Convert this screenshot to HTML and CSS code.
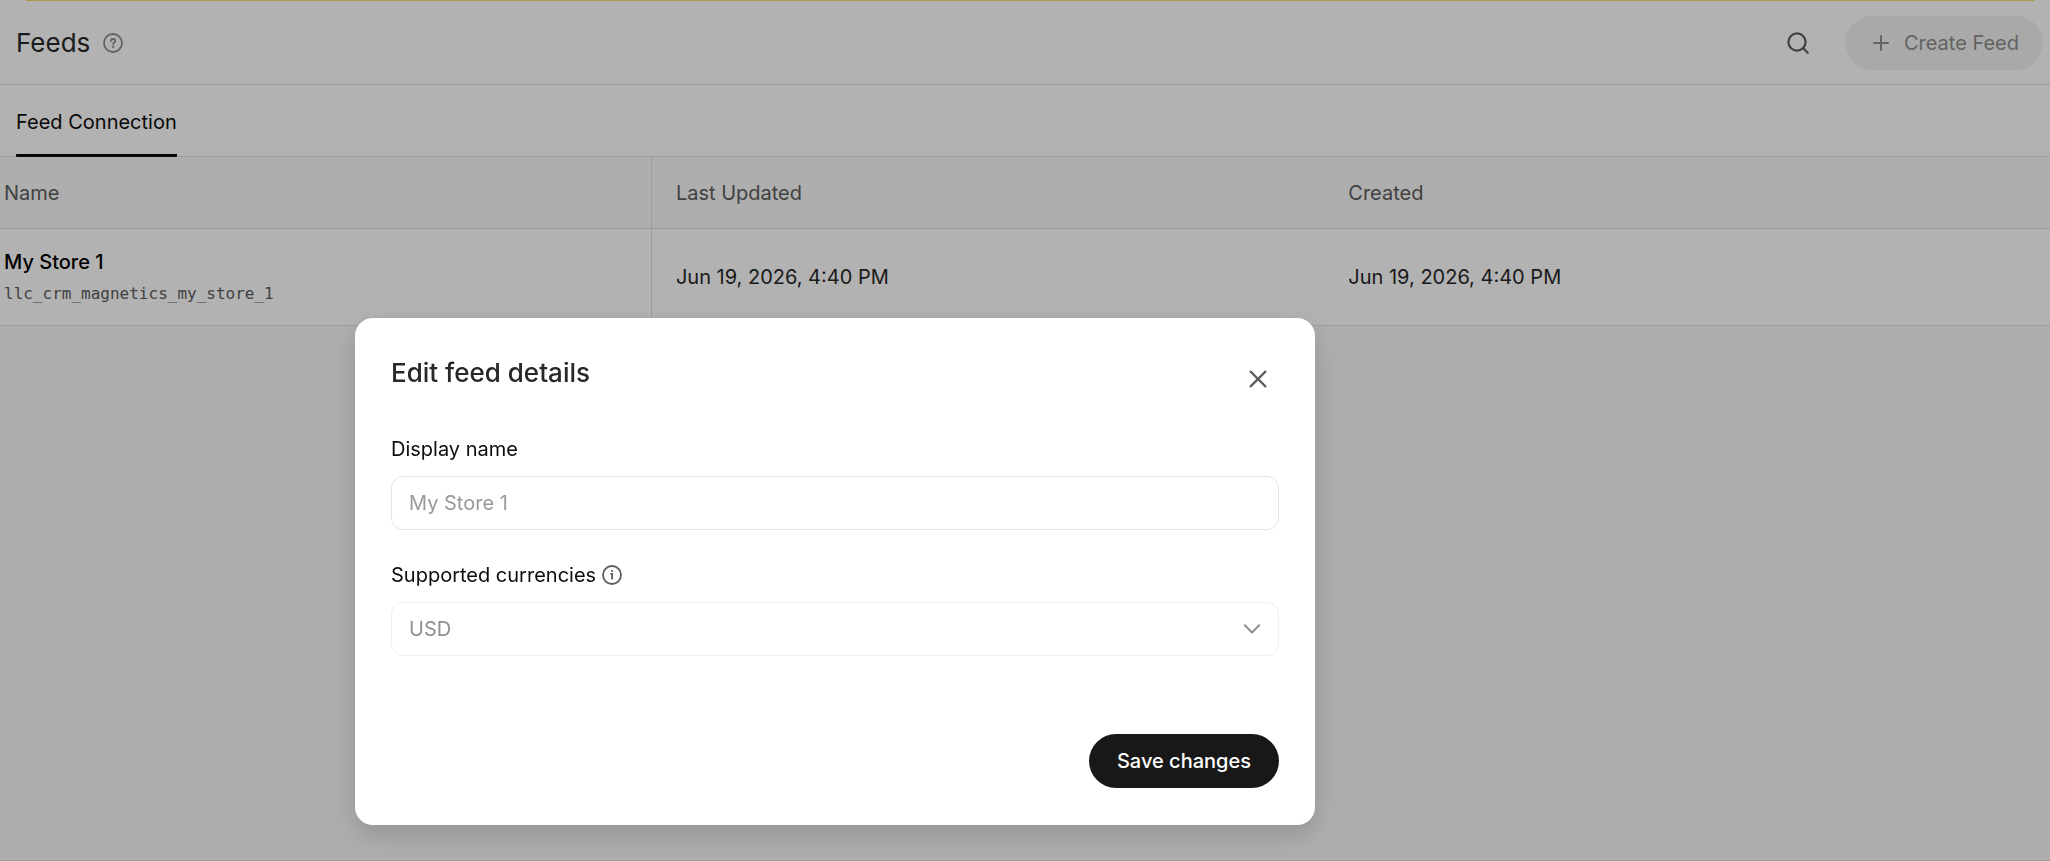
FILE: index.html
```
<!DOCTYPE html>
<html lang="en">
<head>
    <meta charset="UTF-8">
    <meta name="viewport" content="width=device-width, initial-scale=1.0">
    <title>Feeds</title>
    <link rel="stylesheet" href="styles.css">
</head>
<body>
    <div class="page">
        <div class="notice"></div>
        <header class="page-header">
            <div class="page-title">
                <h1>Feeds</h1>
                <svg class="help-icon" width="20" height="20" viewBox="0 0 20 20" fill="none" stroke="currentColor" stroke-width="1.8" stroke-linecap="round">
                    <circle cx="10" cy="10" r="9"/>
                    <path d="M7.9 8.1c0-1.3.9-2.1 2.1-2.1s2.2.8 2.2 2c0 1.5-2 1.6-2 3.1"/>
                    <circle cx="10.2" cy="13.7" r=".4"/>
                </svg>
            </div>
            <div class="page-actions">
                <button class="icon-btn" type="button" aria-label="Search">
                    <svg width="24" height="24" viewBox="0 0 24 24" fill="none" stroke="currentColor" stroke-width="2.2" stroke-linecap="round">
                        <circle cx="11" cy="11" r="8.6"/>
                        <path d="M17.3 17.3l4.4 4.4"/>
                    </svg>
                </button>
                <button class="create-btn" type="button" disabled>
                    <svg width="16" height="16" viewBox="0 0 16 16" fill="none" stroke="currentColor" stroke-width="2" stroke-linecap="round">
                        <path d="M8 1v14M1 8h14"/>
                    </svg>
                    Create Feed
                </button>
            </div>
        </header>

        <nav class="tabs">
            <a class="tab active" href="#">Feed Connection</a>
        </nav>

        <table class="feed-table">
            <thead>
                <tr>
                    <th class="col-name">Name</th>
                    <th class="col-updated">Last Updated</th>
                    <th>Created</th>
                </tr>
            </thead>
            <tbody>
                <tr>
                    <td class="col-name">
                        <div class="feed-name">My Store 1</div>
                        <div class="feed-id">llc_crm_magnetics_my_store_1</div>
                    </td>
                    <td>Jun 19, 2026, 4:40 PM</td>
                    <td>Jun 19, 2026, 4:40 PM</td>
                </tr>
            </tbody>
        </table>
    </div>

    <div class="overlay">
        <div class="modal" role="dialog" aria-labelledby="modalTitle">
            <div class="modal-header">
                <h2 id="modalTitle">Edit feed details</h2>
                <button class="close-btn" type="button" aria-label="Close">
                    <svg width="18" height="18" viewBox="0 0 18 18" fill="none" stroke="currentColor" stroke-width="2.2" stroke-linecap="round">
                        <path d="M1.6 1.6l14.8 14.8M16.4 1.6L1.6 16.4"/>
                    </svg>
                </button>
            </div>

            <form class="modal-form">
                <div class="field">
                    <label for="displayName">Display name</label>
                    <input type="text" id="displayName" placeholder="My Store 1">
                </div>
                <div class="field">
                    <label for="currency">
                        Supported currencies
                        <svg class="info-icon" width="20" height="20" viewBox="0 0 20 20" fill="none" stroke="currentColor" stroke-width="1.8">
                            <circle cx="10" cy="10" r="9"/>
                            <path d="M8.4 8.9h1.7v5.6"/>
                            <circle cx="10" cy="6" r=".7" fill="currentColor" stroke-width=".8"/>
                        </svg>
                    </label>
                    <div class="select-wrap">
                        <select id="currency" disabled>
                            <option>USD</option>
                        </select>
                        <svg class="chevron" width="18" height="18" viewBox="0 0 18 18" fill="none" stroke="currentColor" stroke-width="2" stroke-linecap="round" stroke-linejoin="round">
                            <path d="M1.8 5.3L9 12.5l7.2-7.2"/>
                        </svg>
                    </div>
                </div>
                <div class="modal-footer">
                    <button class="save-btn" type="button">Save changes</button>
                </div>
            </form>
        </div>
    </div>
</body>
</html>
```

FILE: styles.css
```
* {
    margin: 0;
    padding: 0;
    box-sizing: border-box;
}

body {
    background: #f9f9f9;
    min-height: 100vh;
    border-bottom: 1px solid #e1e1e1;
    font-family: Inter, 'Liberation Sans', sans-serif;
    font-size: 20px;
    line-height: 28px;
    color: #282828;
}

button,
input,
select {
    font: inherit;
}

svg {
    display: block;
    flex-shrink: 0;
}

.notice {
    height: 1px;
    margin: 0 16px 0 26px;
    background: #ffd75e;
}

.page {
    background: white;
}

.page-header {
    display: flex;
    justify-content: space-between;
    align-items: center;
    height: 84px;
    padding: 0 7px 0 16px;
    border-bottom: 1px solid #e3e3e3;
}

.page-title {
    display: flex;
    align-items: center;
    gap: 13px;
}

h1 {
    font-size: 26px;
    font-weight: 400;
    line-height: 36px;
}

.help-icon {
    color: #8f8f8f;
}

.page-actions {
    display: flex;
    align-items: center;
    gap: 20px;
}

.icon-btn {
    display: flex;
    align-items: center;
    justify-content: center;
    width: 54px;
    height: 54px;
    background: none;
    border: none;
    color: #5d5d5d;
    cursor: pointer;
}

.create-btn {
    display: flex;
    align-items: center;
    gap: 15px;
    height: 54px;
    padding: 0 24px 0 28px;
    background: #f3f3f3;
    border: none;
    border-radius: 27px;
    color: #8f8f8f;
}

.tabs {
    display: flex;
    height: 72px;
    padding-left: 16px;
    border-bottom: 1px solid #e3e3e3;
}

.tab {
    height: 72px;
    padding-top: 23px;
    border-bottom: 3px solid #0d0d0d;
    border-radius: 1px;
    color: #0d0d0d;
    text-decoration: none;
}

.feed-table {
    width: 100%;
    border-collapse: separate;
    border-spacing: 0;
    table-layout: fixed;
}

.feed-table th,
.feed-table td {
    padding: 0 24px;
    border-bottom: 1px solid #e1e1e1;
    text-align: left;
    font-weight: 400;
}

.feed-table th {
    height: 72px;
    background: #f9f9f9;
    color: #5d5d5d;
}

.feed-table td {
    height: 97px;
}

.feed-table .col-name {
    width: 31.8%;
    padding-left: 4px;
    border-right: 1px solid #e1e1e1;
}

.feed-table .col-updated {
    width: 32.8%;
}

.feed-name {
    padding-top: 2px;
    color: #000;
    font-weight: 500;
}

.feed-id {
    margin-top: 4px;
    color: #5d5d5d;
    font-family: 'DejaVu Sans Mono', monospace;
    font-size: 16px;
}

.overlay {
    position: fixed;
    inset: 0;
    display: flex;
    align-items: flex-start;
    justify-content: center;
    padding: 318px 380px 0 0;
    background: rgba(0, 0, 0, 0.3);
}

.modal {
    width: 960px;
    padding: 37px 36px;
    background: white;
    border-radius: 18px;
    box-shadow: 0 10px 28px rgba(0, 0, 0, 0.16);
}

.modal-header {
    display: flex;
    justify-content: space-between;
    align-items: flex-start;
    height: 80px;
}

h2 {
    font-size: 26px;
    font-weight: 500;
    line-height: 36px;
}

.close-btn {
    display: flex;
    align-items: center;
    justify-content: center;
    width: 42px;
    height: 48px;
    background: none;
    border: none;
    color: #5d5d5d;
    cursor: pointer;
}

.field {
    margin-bottom: 31px;
}

.field label {
    display: flex;
    align-items: center;
    gap: 6px;
    margin-bottom: 13px;
    color: #0d0d0d;
}

.info-icon {
    color: #5d5d5d;
}

.field input,
.field select {
    display: block;
    width: 100%;
    height: 54px;
    padding: 0 17px;
    background: white;
    border: 1px solid #e6e6e6;
    border-radius: 12px;
    color: #0d0d0d;
    outline: none;
}

.field input::placeholder {
    color: #999;
}

.field select {
    appearance: none;
    border-color: #efefef;
    color: #8f8f8f;
    opacity: 1;
}

.select-wrap {
    position: relative;
}

.chevron {
    position: absolute;
    top: 18px;
    right: 18px;
    color: #8f8f8f;
    pointer-events: none;
}

.modal-footer {
    display: flex;
    justify-content: flex-end;
    margin-top: 78px;
}

.save-btn {
    height: 54px;
    padding: 0 28px;
    background: #181818;
    border: none;
    border-radius: 27px;
    color: white;
    font-weight: 500;
    cursor: pointer;
}
```
